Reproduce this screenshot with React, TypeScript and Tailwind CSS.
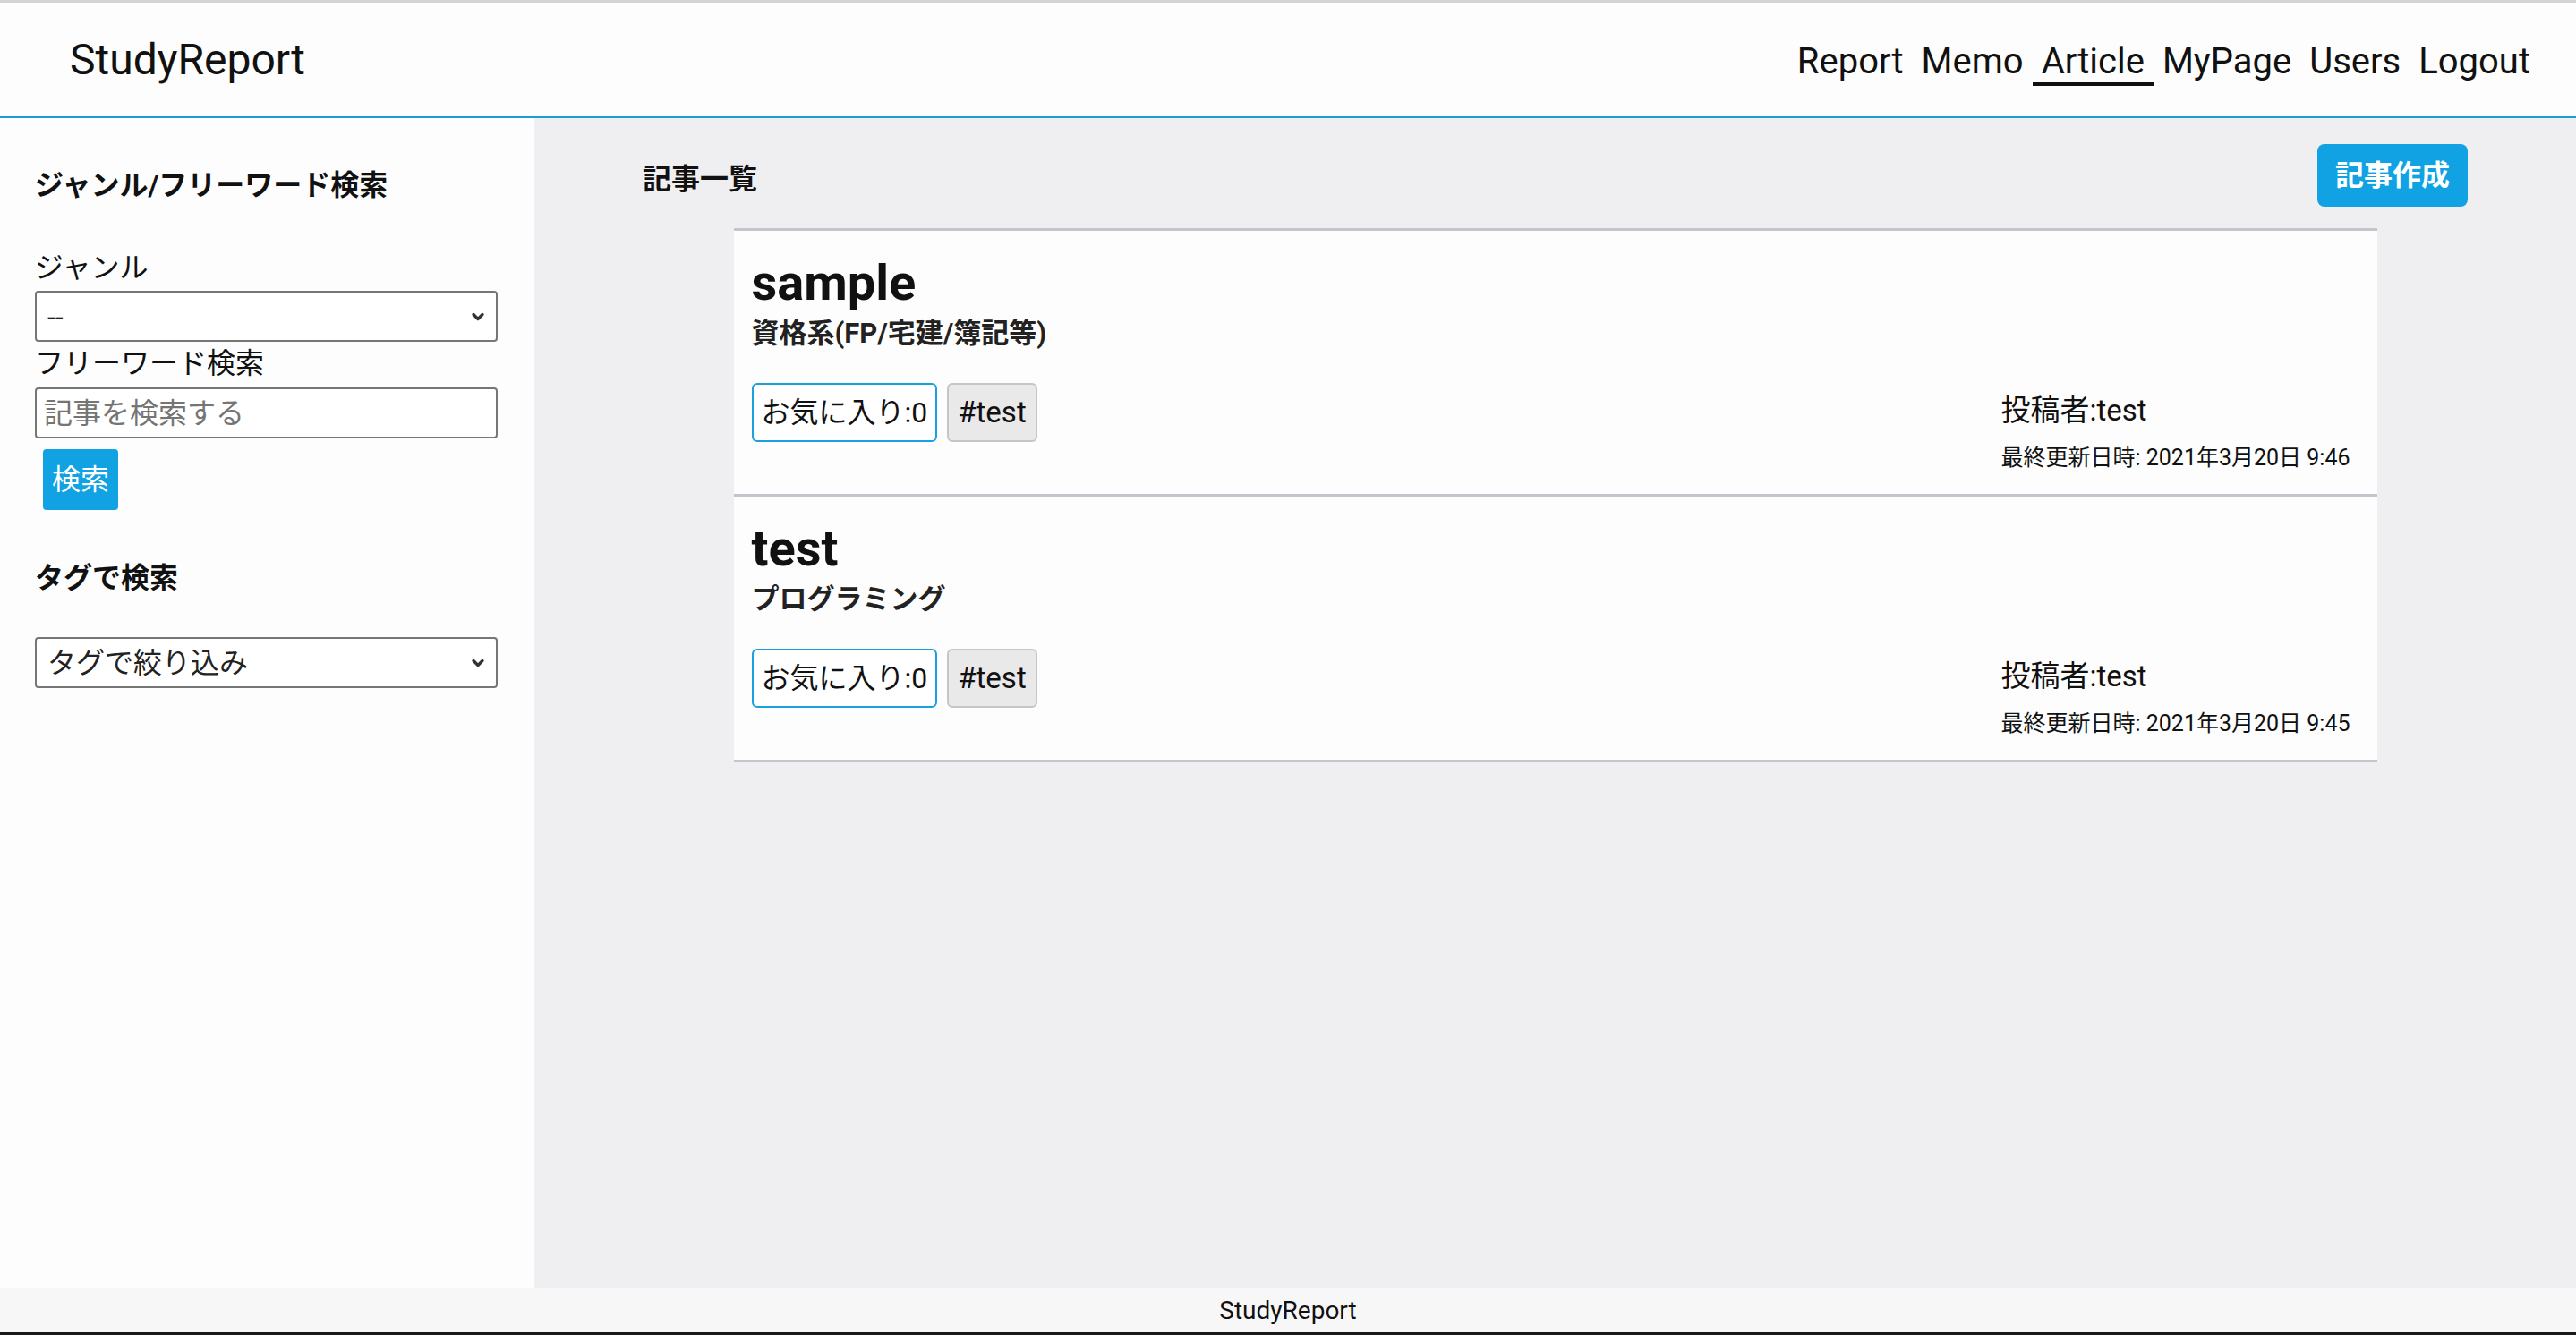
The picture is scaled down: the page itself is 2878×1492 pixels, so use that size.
import { ChevronDown } from "lucide-react";

const navItems = ["Report", "Memo", "Article", "MyPage", "Users", "Logout"];

const articles = [
  {
    title: "sample",
    genre: "資格系(FP/宅建/簿記等)",
    tag: "#test",
    author: "test",
    updated: "2021年3月20日 9:46",
  },
  {
    title: "test",
    genre: "プログラミング",
    tag: "#test",
    author: "test",
    updated: "2021年3月20日 9:45",
  },
];

function Select({ label }: { label: string }) {
  return (
    <div className="relative w-[517px]">
      <select className="h-[57px] w-full appearance-none rounded-[4px] border-2 border-[#767676] bg-white pl-[12px] text-[32px] text-[#222]">
        <option>{label}</option>
      </select>
      <ChevronDown
        className="pointer-events-none absolute right-[12px] top-[19px] h-[20px] w-[20px] text-[#333]"
        strokeWidth={4}
      />
    </div>
  );
}

function Sidebar() {
  return (
    <aside className="flex w-[597px] shrink-0 flex-col bg-[#fdfdfd] pl-[39px] pt-[55px]">
      <h3 className="text-[32px] font-bold leading-[40px] text-[#111]">
        ジャンル/フリーワード検索
      </h3>
      <label className="mt-[52px] mb-[6px] text-[32px] leading-[40px] text-[#111]">
        ジャンル
      </label>
      <Select label="--" />
      <label className="mt-[4px] mb-[7px] text-[32px] leading-[40px] text-[#111]">
        フリーワード検索
      </label>
      <input
        placeholder="記事を検索する"
        className="h-[57px] w-[517px] rounded-[4px] border-2 border-[#767676] bg-white pl-[8px] text-[32px] placeholder:text-[#757575]"
      />
      <button className="ml-[9px] mt-[12px] h-[68px] w-[84px] rounded-[4px] bg-[#10a2e2] text-[32px] text-white">
        検索
      </button>
      <h3 className="mt-[56px] text-[32px] font-bold leading-[40px] text-[#111]">
        タグで検索
      </h3>
      <div className="mt-[46px]">
        <Select label="タグで絞り込み" />
      </div>
    </aside>
  );
}

function ArticleCard({ a }: { a: (typeof articles)[number] }) {
  return (
    <div className="flex items-end justify-between border-t-[3px] border-[#c4c4cc] bg-[#fdfdfd] px-[20px] pb-[24px] pt-[28px]">
      <div className="flex flex-col">
        <h2 className="text-[56px] font-bold leading-[60px] text-[#111]">
          {a.title}
        </h2>
        <p className="mt-[9px] text-[31px] font-bold leading-[36px] text-[#222]">
          {a.genre}
        </p>
        <div className="mb-[34px] mt-[37px] flex gap-[11px]">
          <button className="h-[66px] rounded-[6px] border-2 border-[#1a9fdf] bg-white px-[9px] text-[32px] text-[#111]">
            お気に入り:0
          </button>
          <span className="flex h-[66px] items-center rounded-[6px] border-2 border-[#c6c6c6] bg-[#e9e9e9] px-[10px] text-[33px] text-[#111]">
            {a.tag}
          </span>
        </div>
      </div>
      <div className="flex w-[400px] flex-col">
        <p className="text-[33px] leading-[40px] text-[#111]">
          投稿者:{a.author}
        </p>
        <p className="mt-[17px] whitespace-nowrap text-[25px] leading-[32px] text-[#111]">
          最終更新日時: {a.updated}
        </p>
      </div>
    </div>
  );
}

export default function App() {
  return (
    <div
      className="flex h-[1492px] flex-col overflow-hidden"
      style={{ fontFamily: '"Roboto", "Noto Sans CJK JP", sans-serif' }}
    >
      <div className="h-[3px] bg-[#d4d4d6]" />
      <header className="flex h-[129px] shrink-0 items-center justify-between border-b-2 border-[#1b9bd8] bg-[#fdfdfd] pl-[78px] pr-[41px]">
        <h1 className="text-[48px] leading-none text-[#111]">StudyReport</h1>
        <nav className="mt-[8px] flex">
          {navItems.map((item) => (
            <a
              key={item}
              className={
                item === "Article"
                  ? "border-b-4 border-[#111] px-[10px] text-[40px] leading-[46px] text-[#111]"
                  : "border-b-4 border-transparent px-[10px] text-[40px] leading-[46px] text-[#111]"
              }
            >
              {item}
            </a>
          ))}
        </nav>
      </header>
      <div className="flex flex-1">
        <Sidebar />
        <main className="flex flex-1 flex-col bg-[#efeff1] px-[121px] pt-[29px]">
          <div className="flex items-center justify-between">
            <h2 className="mt-[8px] text-[32px] font-bold text-[#111]">記事一覧</h2>
            <button className="h-[70px] rounded-[8px] bg-[#10a2e2] px-[20px] text-[32px] font-bold text-white">
              記事作成
            </button>
          </div>
          <div className="mx-auto mt-[24px] w-[1836px] border-b-[3px] border-[#c4c4cc]">
            {articles.map((a) => (
              <ArticleCard key={a.title} a={a} />
            ))}
          </div>
        </main>
      </div>
      <footer className="flex h-[49px] shrink-0 items-center justify-center bg-[#f7f7f8] text-[28px] text-[#111]">
        StudyReport
      </footer>
      <div className="h-[3px] bg-[#1a1a1a]" />
    </div>
  );
}
